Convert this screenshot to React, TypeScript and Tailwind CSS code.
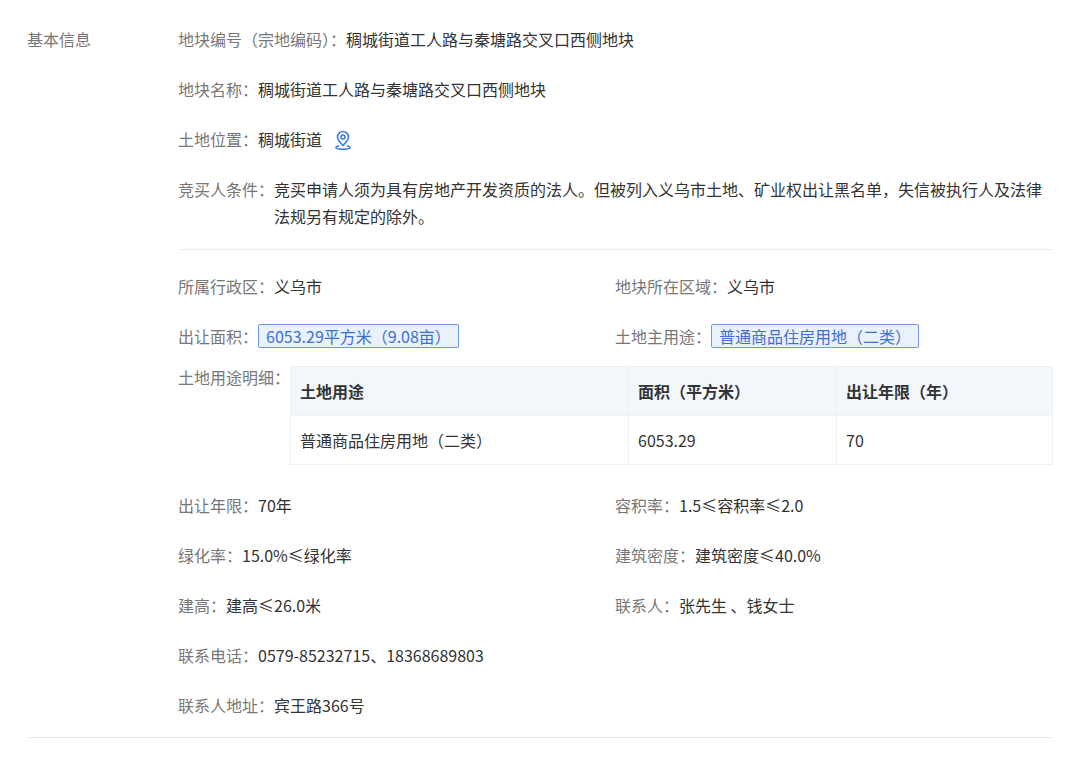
import React from "react";

const font = { fontFamily: '"Microsoft YaHei", "Noto Sans CJK SC", "Noto Sans", sans-serif' };

const Row: React.FC<{ label: string; children: React.ReactNode; className?: string }> = ({ label, children, className }) => (
  <div className={`flex items-start leading-[27px] ${className ?? ""}`}>
    <span className="text-[#777] whitespace-nowrap">{label}：</span>
    <div className="text-[#333] flex-1">{children}</div>
  </div>
);

const Tag: React.FC<{ children: React.ReactNode }> = ({ children }) => (
  <span className="inline-block border border-[#6d9be8] bg-[#e9f1fd] text-[#3d6fd0] rounded-[2px] px-[7px] leading-[22px]">
    {children}
  </span>
);

const PinIcon = () => (
  <svg width="18" height="20" viewBox="0 0 18 20" fill="none" stroke="#3d7be0" strokeWidth="1.6" className="inline-block ml-3 -mt-1">
    <path d="M9 15.5C5.5 12 3.5 9.6 3.5 7A5.5 5.5 0 0 1 14.5 7c0 2.6-2 5-5.5 8.5z" />
    <circle cx="9" cy="7" r="2" />
    <path d="M5 15.8C3 16.3 2 17 2 17.6c0 1 3.1 1.7 7 1.7s7-.7 7-1.7c0-.6-1-1.3-3-1.8" />
  </svg>
);

export default function App() {
  return (
    <div className="w-[1080px] h-[762px] bg-white text-[16px]" style={font}>
      <div className="mx-[27px] flex border-b border-[#e8e8e8] pb-[18px]">
        <div className="w-[151px] pt-[26px] leading-[27px] text-[#777]">基本信息</div>
        <div className="flex-1 pt-[26px] flex flex-col">
          <Row label="地块编号（宗地编码）" className="mb-[23px]">稠城街道工人路与秦塘路交叉口西侧地块</Row>
          <Row label="地块名称" className="mb-[23px]">稠城街道工人路与秦塘路交叉口西侧地块</Row>
          <Row label="土地位置" className="mb-[23px]">稠城街道<PinIcon /></Row>
          <Row label="竞买人条件">
            竞买申请人须为具有房地产开发资质的法人。但被列入义乌市土地、矿业权出让黑名单，失信被执行人及法律法规另有规定的除外。
          </Row>
          <div className="border-t border-[#ececec] mt-[19px] pt-[23px] grid grid-cols-[437px_1fr] gap-y-[23px]">
            <Row label="所属行政区">义乌市</Row>
            <Row label="地块所在区域">义乌市</Row>
            <Row label="出让面积"><Tag>6053.29平方米（9.08亩）</Tag></Row>
            <Row label="土地主用途"><Tag>普通商品住房用地（二类）</Tag></Row>
          </div>
          <div className="flex items-start mt-[16px] mb-[27px]">
            <span className="text-[#777] leading-[27px] mt-[-2px]">土地用途明细：</span>
            <table className="flex-1 border-collapse text-left">
              <thead>
                <tr className="bg-[#f2f7fc] text-[#333] font-bold h-[49px]">
                  <th className="w-[338px] px-[9px] border border-[#eef0f3]">土地用途</th>
                  <th className="w-[208px] px-[9px] border border-[#eef0f3]">面积（平方米）</th>
                  <th className="px-[9px] border border-[#eef0f3]">出让年限（年）</th>
                </tr>
              </thead>
              <tbody>
                <tr className="text-[#333] h-[49px]">
                  <td className="px-[9px] border border-[#eef0f3]">普通商品住房用地（二类）</td>
                  <td className="px-[9px] border border-[#eef0f3]">6053.29</td>
                  <td className="px-[9px] border border-[#eef0f3]">70</td>
                </tr>
              </tbody>
            </table>
          </div>
          <div className="grid grid-cols-[437px_1fr] gap-y-[23px]">
            <Row label="出让年限">70年</Row>
            <Row label="容积率">1.5≤容积率≤2.0</Row>
            <Row label="绿化率">15.0%≤绿化率</Row>
            <Row label="建筑密度">建筑密度≤40.0%</Row>
            <Row label="建高">建高≤26.0米</Row>
            <Row label="联系人">张先生 、钱女士</Row>
            <Row label="联系电话" className="col-span-2">0579-85232715、18368689803</Row>
            <Row label="联系人地址" className="col-span-2">宾王路366号</Row>
          </div>
        </div>
      </div>
    </div>
  );
}
